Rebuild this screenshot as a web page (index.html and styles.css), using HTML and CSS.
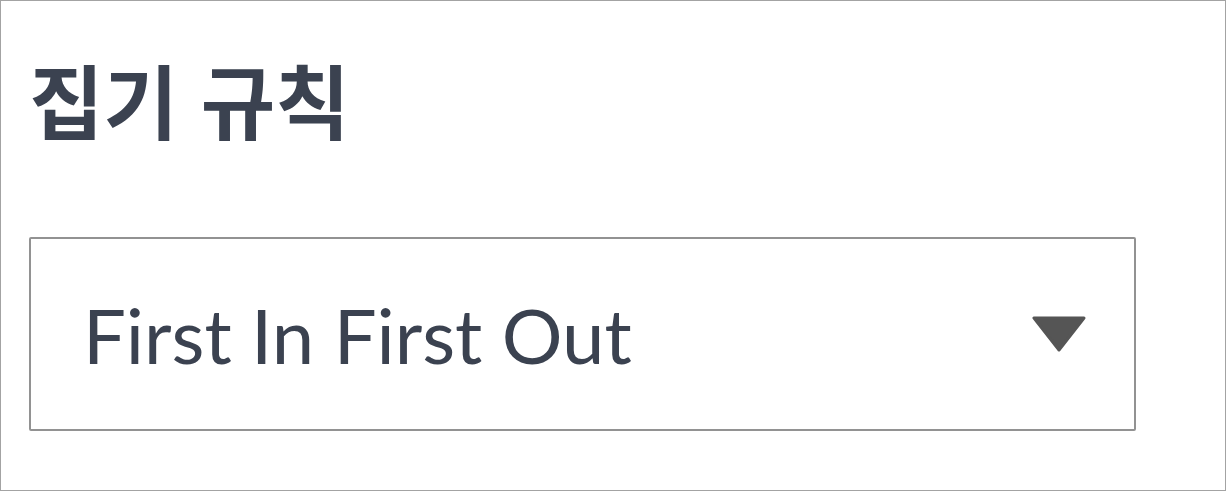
FILE: index.html
```html
<!DOCTYPE html>
<html lang="ko">
<head>
<meta charset="utf-8">
<link rel="stylesheet" href="styles.css">
</head>
<body>
<div class="frame">
  <h1 class="title">집기 규칙</h1>
  <div class="select">
    <span class="select-value">First In First Out</span>
    <svg class="caret" width="54" height="36" viewBox="0 0 54 36"><path d="M2 2 L52 2 L27 34 Z" fill="#555" stroke="#555" stroke-width="3" stroke-linejoin="round"/></svg>
  </div>
</div>
</body>
</html>
```
FILE: styles.css
```css
html, body { margin: 0; padding: 0; background: #fff; }
.frame {
  box-sizing: border-box;
  width: 1226px;
  height: 491px;
  border: 1px solid #a3a3a3;
  padding: 42px 0 0 28px;
}
.title {
  margin: 0;
  font-family: "Noto Sans CJK KR", "Noto Sans", sans-serif;
  font-weight: 700;
  font-size: 81px;
  line-height: 110px;
  color: #3b4250;
  letter-spacing: 0;
}
.select {
  box-sizing: border-box;
  margin-top: 84px;
  width: 1107px;
  height: 194px;
  border: 2px solid #929292;
  border-radius: 2px;
  display: flex;
  align-items: center;
  justify-content: space-between;
  padding: 0 48px 0 52px;
}
.select-value {
  font-family: Lato, "Noto Sans", sans-serif;
  font-size: 76px;
  color: #3b4250;
}
.caret { display: block; }
```
